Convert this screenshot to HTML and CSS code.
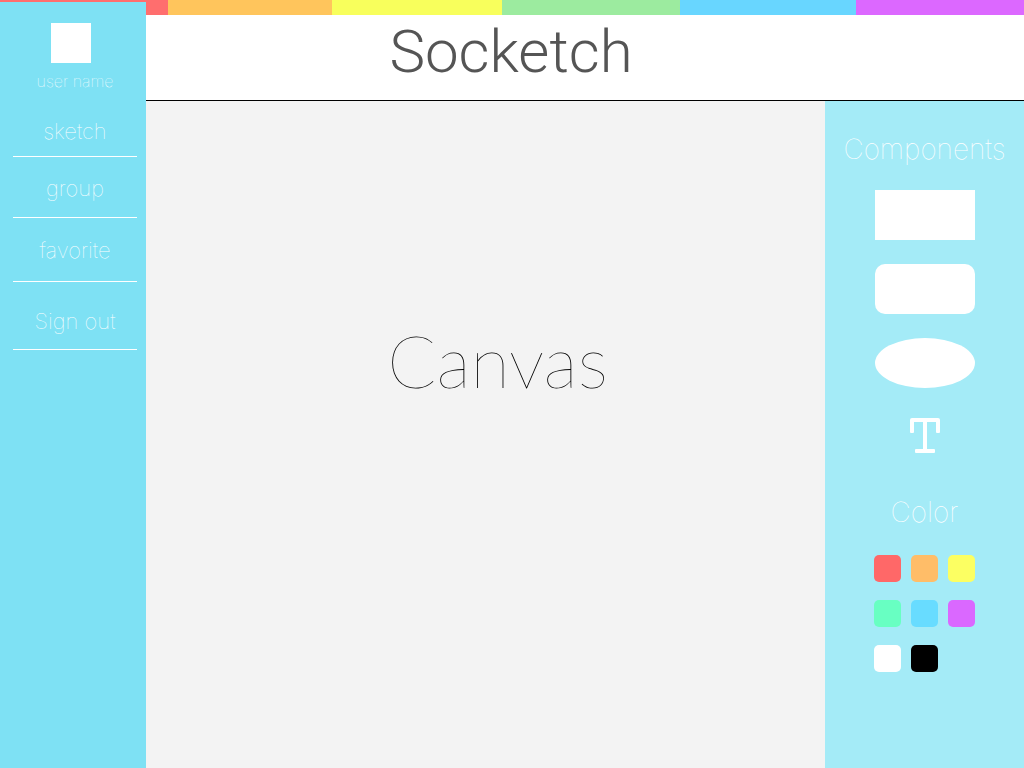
FILE: index.html
```html
<!DOCTYPE html>
<html lang="en">
<head>
<meta charset="utf-8">
<title>Socketch</title>
<link rel="stylesheet" href="styles.css">
</head>
<body>
<div class="app">
  <aside class="sidebar">
    <div class="avatar"></div>
    <p class="user">user name</p>
    <nav class="menu">
      <a class="item sketch" href="#">sketch</a>
      <a class="item group" href="#">group</a>
      <a class="item favorite" href="#">favorite</a>
      <a class="item signout" href="#">Sign out</a>
    </nav>
  </aside>
  <div class="page">
    <div class="stripe">
      <span class="band red"></span><span class="band orange"></span><span class="band yellow"></span><span class="band green"></span><span class="band blue"></span><span class="band purple"></span>
    </div>
    <header class="header"><h1 class="title">Socketch</h1></header>
    <div class="workspace">
      <main class="canvas"><p class="canvas-label">Canvas</p></main>
      <aside class="tools">
        <h2 class="heading">Components</h2>
        <div class="shapes">
          <button class="shape" type="button" aria-label="Rectangle"></button>
          <button class="shape rounded" type="button" aria-label="Rounded rectangle"></button>
          <button class="shape ellipse" type="button" aria-label="Ellipse"></button>
          <button class="text-tool" type="button" aria-label="Text">
            <svg width="32" height="36" viewBox="0 0 32 36" fill="#fff"><path d="M3 0H29Q31 0 31 2V14Q31 15 30 15H28Q27 15 27 14V4H18V31H25Q26 31 26 32V34Q26 35 25 35H7Q6 35 6 34V32Q6 31 7 31H14V4H5V14Q5 15 4 15H2Q1 15 1 14V2Q1 0 3 0Z"/></svg>
          </button>
        </div>
        <h2 class="heading">Color</h2>
        <div class="palette">
          <button class="swatch c-red" type="button" aria-label="Red"></button>
          <button class="swatch c-orange" type="button" aria-label="Orange"></button>
          <button class="swatch c-yellow" type="button" aria-label="Yellow"></button>
          <button class="swatch c-green" type="button" aria-label="Green"></button>
          <button class="swatch c-blue" type="button" aria-label="Blue"></button>
          <button class="swatch c-purple" type="button" aria-label="Purple"></button>
          <button class="swatch c-white" type="button" aria-label="White"></button>
          <button class="swatch c-black" type="button" aria-label="Black"></button>
        </div>
      </aside>
    </div>
  </div>
</div>
</body>
</html>
```
FILE: styles.css
```css
* { box-sizing: border-box; }
body { margin: 0; font-family: Inter, "Liberation Sans", sans-serif; font-weight: 100; }
h1, h2, p { margin: 0; font-weight: inherit; }
button { padding: 0; border: 0; background: none; cursor: pointer; }

.app { display: flex; min-height: 100vh; }

.sidebar {
  display: flex; flex-direction: column; align-items: center;
  flex: 0 0 146px; padding: 21px 9px 0 13px;
  border-top: 2px solid #ff6e6e; background: #7ee1f4; color: #fff;
}
.avatar { width: 40px; height: 40px; margin-right: 8px; background: #fff; }
.user { margin-top: 8px; font-size: 16px; line-height: 20px; }
.menu { align-self: stretch; margin-top: 20px; }
.item {
  display: flex; align-items: flex-end; justify-content: center;
  padding-bottom: 11px; border-bottom: 1px solid #fff;
  color: #fff; font-size: 22px; line-height: 28px; text-decoration: none;
}
.sketch { height: 46px; }
.group { height: 61px; padding-bottom: 15px; }
.favorite { height: 64px; padding-bottom: 17px; }
.signout { height: 68px; padding-bottom: 14px; }

.page { display: flex; flex-direction: column; flex: 1; min-width: 0; }
.stripe { display: flex; height: 15px; }
.band { flex-basis: 0; }
.red { flex-grow: 22; background: #ff6e6e; }
.orange { flex-grow: 164; background: #ffc55c; }
.yellow { flex-grow: 170; background: #f8ff5c; }
.green { flex-grow: 178; background: #9ceb9f; }
.blue { flex-grow: 176; background: #68d6ff; }
.purple { flex-grow: 168; background: #dc68ff; }

.header { height: 86px; padding-right: 148px; border-bottom: 1px solid #000; background: #fff; text-align: center; }
.title { color: #555; font-family: Roboto, sans-serif; font-size: 60px; font-weight: 300; line-height: 74px; }

.workspace { display: flex; flex: 1; }
.canvas { flex: 1; padding: 215px 0 0 24px; background: #f3f3f3; text-align: center; }
.canvas-label { color: #000; font-family: Lato, sans-serif; font-size: 72px; line-height: 88px; }

.tools { display: flex; flex-direction: column; align-items: center; flex: 0 0 199px; padding-top: 30px; background: #a4ebf7; color: #fff; }
.heading { font-size: 28px; line-height: 36px; }
.shapes { display: flex; flex-direction: column; align-items: center; gap: 24px; margin: 23px 0 37px; }
.shape { width: 100px; height: 50px; background: #fff; }
.rounded { border-radius: 10px; }
.ellipse { border-radius: 50%; }
.text-tool { height: 45px; padding-top: 2px; }
.text-tool svg { display: block; }
.palette { display: grid; grid-template-columns: repeat(3, 27px); gap: 18px 10px; margin-top: 25px; }
.swatch { height: 27px; border-radius: 5px; }
.c-red { background: #ff6868; }
.c-orange { background: #ffbd68; }
.c-yellow { background: #fcff62; }
.c-green { background: #68ffc2; }
.c-blue { background: #68dcff; }
.c-purple { background: #da68ff; }
.c-white { background: #fff; }
.c-black { background: #000; }
```
